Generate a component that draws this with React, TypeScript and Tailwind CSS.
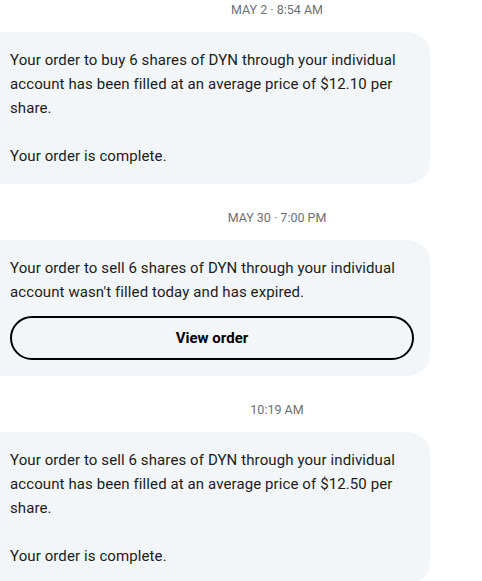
import React from 'react';

interface Message {
  id: string;
  time: string;
  lines: string[];
  action?: string;
}

const MESSAGES: Message[] = [
  {
    id: 'm1',
    time: 'MAY 2 · 8:54 AM',
    lines: [
      'Your order to buy 6 shares of DYN through your individual account has been filled at an average price of $12.10 per share.',
      'Your order is complete.',
    ],
  },
  {
    id: 'm2',
    time: 'MAY 30 · 7:00 PM',
    lines: [
      "Your order to sell 6 shares of DYN through your individual account wasn't filled today and has expired.",
    ],
    action: 'View order',
  },
  {
    id: 'm3',
    time: '10:19 AM',
    lines: [
      'Your order to sell 6 shares of DYN through your individual account has been filled at an average price of $12.50 per share.',
      'Your order is complete.',
    ],
  },
];

export default function App() {
  return (
    <div
      className="min-h-screen w-[482px] overflow-hidden bg-white text-[#1b1b1b]"
      style={{ fontFamily: 'Roboto, Inter, "Noto Sans", sans-serif' }}
    >
      <div className="flex flex-col pt-[2px]">
        {MESSAGES.map((m, i) => (
          <div key={m.id} className={i > 0 ? 'pt-[26px]' : ''}>
            <div className="pl-[72px] text-center text-[12.5px] leading-[16px] text-[#6b7178]">
              {m.time}
            </div>
            <div className="mt-[14px] ml-[-24px] w-[454px] rounded-[22px] bg-[#f3f6f9] py-4 pl-[34px] pr-4 text-[15px] leading-[24px] tracking-[0.1px]">
              {m.lines.map((line, j) => (
                <p key={j} className={j > 0 ? 'mt-6' : ''}>
                  {line}
                </p>
              ))}
              {m.action && (
                <button className="mt-3 flex h-[44px] w-full items-center justify-center rounded-full border-2 border-black text-[15px] font-bold tracking-normal text-black">
                  {m.action}
                </button>
              )}
            </div>
          </div>
        ))}
      </div>
    </div>
  );
}
